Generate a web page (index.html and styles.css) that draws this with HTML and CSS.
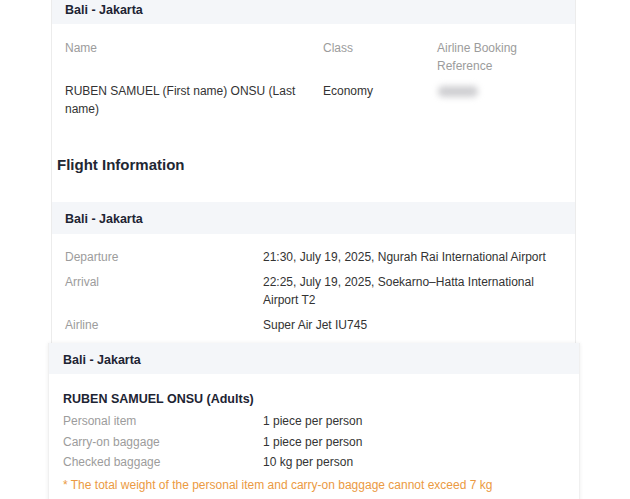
FILE: index.html
```html
<!DOCTYPE html>
<html>
<head>
<meta charset="utf-8">
<link rel="stylesheet" href="styles.css">
</head>
<body>
<div class="wrap">
  <section class="card">
    <div class="card-head first">Bali - Jakarta</div>
    <div class="pax-grid">
      <div class="label">Name</div>
      <div class="label">Class</div>
      <div class="label">Airline Booking Reference</div>
      <div class="value name">RUBEN SAMUEL (First name) ONSU (Last name)</div>
      <div class="value">Economy</div>
      <div class="value"><span class="blurred"></span></div>
    </div>
  </section>

  <h2 class="section-title">Flight Information</h2>

  <section class="card">
    <div class="card-head">Bali - Jakarta</div>
    <div class="info-list">
      <div class="info-row"><div class="label">Departure</div><div class="value">21:30, July 19, 2025, Ngurah Rai International Airport</div></div>
      <div class="info-row"><div class="label">Arrival</div><div class="value">22:25, July 19, 2025, Soekarno–Hatta International Airport T2</div></div>
      <div class="info-row"><div class="label">Airline</div><div class="value">Super Air Jet IU745</div></div>
    </div>
  </section>
</div>

<section class="bag-card">
  <div class="card-head">Bali - Jakarta</div>
  <div class="bag-body">
    <div class="bag-title">RUBEN SAMUEL ONSU (Adults)</div>
    <div class="bag-row"><div class="label">Personal item</div><div class="value">1 piece per person</div></div>
    <div class="bag-row"><div class="label">Carry-on baggage</div><div class="value">1 piece per person</div></div>
    <div class="bag-row"><div class="label">Checked baggage</div><div class="value">10 kg per person</div></div>
    <div class="bag-note">* The total weight of the personal item and carry-on baggage cannot exceed 7 kg</div>
  </div>
</section>
</body>
</html>
```

FILE: styles.css
```css
html, body {
  margin: 0;
  padding: 0;
  background: #ffffff;
}
body {
  font-family: "Liberation Sans", Arial, sans-serif;
  font-size: 12px;
  color: #333333;
  overflow: hidden;
}
.wrap {
  margin: -6px 0 0 51px;
  width: 523px;
  border-left: 1px solid #ececec;
  border-right: 1px solid #ececec;
  padding-bottom: 9px;
}
.card-head {
  background: #f4f6f9;
  color: #1d2433;
  font-weight: bold;
  font-size: 12.5px;
  height: 32px;
  line-height: 35px;
  padding: 0 13px;
}
.card-head.first {
  height: 30px;
  line-height: 32px;
}
.label {
  color: #9c9c9c;
}
.value {
  color: #333333;
}
.pax-grid {
  display: grid;
  grid-template-columns: 258px 114px 1fr;
  row-gap: 7px;
  line-height: 18px;
  padding: 15px 13px 0;
}
.pax-grid .name {
  padding-right: 8px;
}
.blurred {
  display: inline-block;
  width: 40px;
  height: 11px;
  margin: 4px 0 0 1px;
  background: #cfcfd2;
  border-radius: 5px;
  filter: blur(3px);
  vertical-align: top;
}
.section-title {
  margin: 37px 0 27px 5px;
  font-size: 15px;
  line-height: 20px;
  color: #222733;
  font-weight: bold;
}
.info-list {
  display: flex;
  flex-direction: column;
  gap: 7px;
  padding: 14px 13px 0;
  line-height: 18px;
}
.info-row {
  display: grid;
  grid-template-columns: 198px 1fr;
}
.info-row .value {
  max-width: 292px;
}
.bag-card {
  margin: 0 0 0 48px;
  width: 530px;
  box-shadow: 0 0 4px rgba(0, 0, 0, 0.07);
  border-left: 1px solid #f0f0f0;
  border-right: 1px solid #f0f0f0;
}
.bag-card .card-head {
  height: 31px;
  line-height: 34px;
  padding: 0 14px;
}
.bag-body {
  padding: 16px 14px 10px;
}
.bag-title {
  font-weight: bold;
  font-size: 12.5px;
  color: #1d2433;
  line-height: 18px;
  margin-bottom: 3px;
}
.bag-row {
  display: grid;
  grid-template-columns: 200px 1fr;
  line-height: 20.5px;
}
.bag-note {
  color: #eb9a42;
  line-height: 18px;
  margin-top: 3px;
}
```
